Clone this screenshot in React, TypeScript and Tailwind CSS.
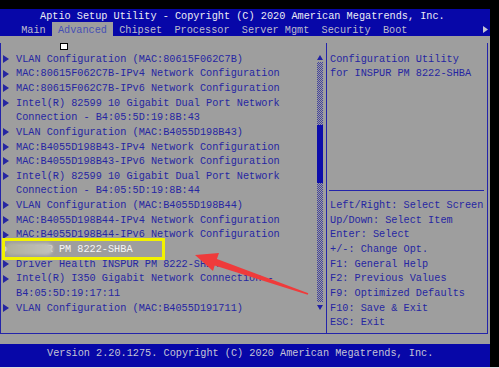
import React from "react";

interface Item {
  text: string;
  arrow?: boolean;
  selected?: boolean;
}

const items: Item[] = [
  { text: "VLAN Configuration (MAC:80615F062C7B)", arrow: true },
  { text: "MAC:80615F062C7B-IPv4 Network Configuration", arrow: true },
  { text: "MAC:80615F062C7B-IPv6 Network Configuration", arrow: true },
  { text: "Intel(R) 82599 10 Gigabit Dual Port Network", arrow: true },
  { text: "Connection - B4:05:5D:19:8B:43" },
  { text: "VLAN Configuration (MAC:B4055D198B43)", arrow: true },
  { text: "MAC:B4055D198B43-IPv4 Network Configuration", arrow: true },
  { text: "MAC:B4055D198B43-IPv6 Network Configuration", arrow: true },
  { text: "Intel(R) 82599 10 Gigabit Dual Port Network", arrow: true },
  { text: "Connection - B4:05:5D:19:8B:44" },
  { text: "VLAN Configuration (MAC:B4055D198B44)", arrow: true },
  { text: "MAC:B4055D198B44-IPv4 Network Configuration", arrow: true },
  { text: "MAC:B4055D198B44-IPv6 Network Configuration", arrow: true },
  { text: "INSPUR PM 8222-SHBA", arrow: true, selected: true },
  { text: "Driver Health INSPUR PM 8222-SHBA", arrow: true },
  { text: "Intel(R) I350 Gigabit Network Connection -", arrow: true },
  { text: "B4:05:5D:19:17:11" },
  { text: "VLAN Configuration (MAC:B4055D191711)", arrow: true },
];

const tabs = ["Main", "Advanced", "Chipset", "Processor", "Server Mgmt", "Security", "Boot"];

const help = [
  "Left/Right: Select Screen",
  "Up/Down: Select Item",
  "Enter: Select",
  "+/-: Change Opt.",
  "F1: General Help",
  "F2: Previous Values",
  "F9: Optimized Defaults",
  "F10: Save & Exit",
  "ESC: Exit",
];

function Tri({ color }: { color: string }) {
  return (
    <svg width="6" height="8" viewBox="0 0 6 8" className="ml-[2px]">
      <polygon points="0,0 6,4 0,8" fill={color} />
    </svg>
  );
}

const dotted =
  "bg-[conic-gradient(#2828a0_25%,#9e9e9e_0_50%,#2828a0_0_75%,#9e9e9e_0)] bg-[length:2px_2px] opacity-80";

export default function App() {
  return (
    <div className="relative w-[499px] h-[368px] bg-black flex flex-col overflow-hidden font-['Liberation_Mono','DejaVu_Sans_Mono',monospace] text-[10.23px] whitespace-pre">
      <div className="h-[9px] shrink-0" />
      <div className="flex flex-1">
        <div className="w-[490px] flex flex-col">
          {/* Header */}
          <div className="bg-[#0707a8] h-[27px] flex flex-col">
            <div className="h-[13px] pl-[40px] leading-[13px] pt-px text-[#ececf4]">
              Aptio Setup Utility - Copyright (C) 2020 American Megatrends, Inc.
            </div>
            <div className="h-[14px] flex items-stretch justify-between pr-[2px]">
              <div className="flex pl-[15px]">
                {tabs.map((t) => (
                  <div
                    key={t}
                    className={`px-[6.14px] leading-[14px] pt-px ${
                      t === "Advanced" ? "bg-[#9e9e9e] text-[#4650b4]" : "text-[#bcbccc]"
                    }`}
                  >
                    {t}
                  </div>
                ))}
              </div>
              <div className="flex items-center pt-px">
                <svg width="5" height="7" viewBox="0 0 5 7">
                  <polygon points="0,0 5,3.5 0,7" fill="#c4c4d4" />
                </svg>
              </div>
            </div>
          </div>

          {/* Body */}
          <div className="bg-[#9e9e9e] h-[308px] pt-[7px]">
            <div className="w-[488px] h-[291px] border-l border-r border-b border-[#2424aa] flex">
              {/* Left panel */}
              <div className="w-[326px] border-r border-[#2424aa] flex">
                <div className="flex-1 pt-[8.7px] text-[#2626a2]">
                  {items.map((it, i) => (
                    <div key={i} className="relative flex items-center h-[14.65px] leading-[14.65px]">
                      <div className="w-[15px] flex items-center">
                        {it.arrow && <Tri color={it.selected ? "#f4f4f4" : "#2626a2"} />}
                      </div>
                      <span className={it.selected ? "text-[#f6f6f6]" : ""}>{it.text}</span>
                      {it.selected && (
                        <div className="absolute left-[4px] top-[1px] w-[48px] h-[12px] rounded-full bg-gradient-to-r from-[#aeae9c] to-[#c2c2bc] blur-[1.5px]" />
                      )}
                    </div>
                  ))}
                </div>
                {/* Scrollbar */}
                <div className="w-[6px] mr-[3px] pt-[12px] flex flex-col items-center">
                  <svg width="6" height="5" viewBox="0 0 6 5">
                    <polygon points="3,0 6,5 0,5" fill="#2020a4" />
                  </svg>
                  <div className="mt-[2px] w-[6px] h-[240px] flex flex-col">
                    <div className={`h-[63px] ${dotted}`} />
                    <div className="h-[58px] bg-[#0c0caa]" />
                    <div className={`flex-1 ${dotted}`} />
                  </div>
                  <svg width="6" height="5" viewBox="0 0 6 5" className="mt-[3px]">
                    <polygon points="0,0 6,0 3,5" fill="#2020a4" />
                  </svg>
                </div>
              </div>

              {/* Right panel */}
              <div className="flex-1 pl-[3px] pt-[8.7px] text-[#2626a2]">
                <div className="h-[14.65px] leading-[14.65px]">Configuration Utility</div>
                <div className="h-[14.65px] leading-[14.65px]">for INSPUR PM 8222-SHBA</div>
                <div className="h-[102.55px]" />
                <div className="h-[14.65px] flex items-center -ml-px">
                  <div className="w-[155px] h-px bg-[#2424aa]" />
                </div>
                {help.map((h) => (
                  <div key={h} className="h-[14.65px] leading-[14.65px]">
                    {h}
                  </div>
                ))}
              </div>
            </div>
          </div>

          {/* Footer */}
          <div className="bg-[#0707a8] h-[23px] pl-[47px] pt-[2px] leading-[14px] text-[#c4c4d6]">
            Version 2.20.1275. Copyright (C) 2020 American Megatrends, Inc.
          </div>
        </div>
        <div className="flex-1" />
      </div>
      <div className="h-[1px] shrink-0 bg-[#dcdcdc]" />

      {/* Overlays */}
      <div className="absolute left-[60px] top-[43px] w-[8px] h-[7px] bg-white border border-black" />
      <div className="absolute left-[2px] top-[238px] w-[163px] h-[22px] border-[3px] border-[#f2f200]" />
      <svg className="absolute left-0 top-0 pointer-events-none" width="499" height="368" viewBox="0 0 499 368">
        <polygon
          points="195,255 219,253 216.9,258.9 308.3,293.2 307.7,294.8 214.7,265.5 213,271"
          fill="#ef3b3b"
        />
      </svg>
    </div>
  );
}
